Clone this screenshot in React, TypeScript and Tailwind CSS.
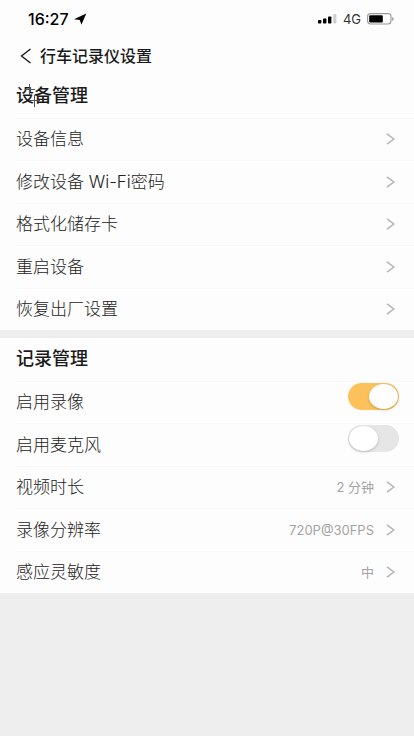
import { useState } from 'react';

type Row = {
  label: string;
  value?: string;
};

const deviceRows: Row[] = [
  { label: '设备信息' },
  { label: '修改设备 Wi-Fi密码' },
  { label: '格式化储存卡' },
  { label: '重启设备' },
  { label: '恢复出厂设置' },
];

const recordRows: Row[] = [
  { label: '视频时长', value: '2 分钟' },
  { label: '录像分辨率', value: '720P@30FPS' },
  { label: '感应灵敏度', value: '中' },
];

function StatusBar() {
  return (
    <div className="flex h-[37px] items-center justify-between pl-7 pr-5 text-black">
      <div className="flex items-center gap-1">
        <span className="text-base font-medium leading-5">16:27</span>
        <svg width="14" height="12" viewBox="0 0 14 12" fill="currentColor">
          <path d="M13.300 0.400 8.400 11.700 6.800 7 1 6.300Z" />
        </svg>
      </div>
      <div className="flex items-center gap-1.5">
        <svg width="19" height="10" viewBox="0 0 19 10" fill="currentColor">
          <rect x="0" y="6" width="3.4" height="3.5" rx="0.8" />
          <rect x="5" y="4.5" width="3.4" height="5" rx="0.8" />
          <rect x="10" y="2.5" width="3.4" height="7" rx="0.8" />
          <rect x="15.2" y="0" width="3.2" height="9.5" rx="0.8" fill="#cfcfcf" />
        </svg>
        <span className="text-[13px] leading-4 text-[#333]">4G</span>
        <svg width="27" height="12" viewBox="0 0 27 12">
          <rect x="0.6" y="0.6" width="23.4" height="10.4" rx="3" fill="none" stroke="#9a9a9a" strokeWidth="1.1" />
          <rect x="2.2" y="2.2" width="13.6" height="7.200" rx="1.2" fill="#000" />
          <path d="M25.200 4v4c1-.3 1.400-1 1.400-2s-.4-1.700-1.400-2Z" fill="#9a9a9a" />
        </svg>
      </div>
    </div>
  );
}

function Chevron() {
  return (
    <svg width="9" height="12" viewBox="0 0 9 12" fill="none" stroke="#b4b4b4" strokeWidth="1.5">
      <path d="M1 0.800 7.800 6 1 11.200" />
    </svg>
  );
}

function LinkRow({ label, value }: Row) {
  return (
    <li className="ml-4 flex border-t border-[#f8f8f8]">
      <button type="button" className="flex flex-1 items-center pr-[19px] text-left">
        <span className="flex-1 text-[17px] font-light leading-6 text-[#222]">{label}</span>
        {value && <span className="mr-3 text-[13px] leading-5 text-[#a3a3a3]">{value}</span>}
        <Chevron />
      </button>
    </li>
  );
}

function SwitchRow({ label, initial }: { label: string; initial: boolean }) {
  const [checked, setChecked] = useState(initial);

  return (
    <li className="ml-4 flex border-t border-[#f8f8f8]">
      <label className="flex flex-1 items-center pr-[15px]">
        <span className="flex-1 text-[17px] font-light leading-6 text-[#222]">{label}</span>
        <input
          type="checkbox"
          role="switch"
          checked={checked}
          onChange={(e) => setChecked(e.target.checked)}
          className="mt-px h-[27px] w-[51px] appearance-none self-start rounded-full bg-[#e6e6e6] p-px before:block before:h-[25px] before:w-[29px] before:rounded-[50%] before:bg-white before:shadow-[0_1px_3px_rgba(0,0,0,0.2)] checked:bg-[#fdc15c] checked:before:ml-5"
        />
      </label>
    </li>
  );
}

function SectionTitle({ children }: { children: string }) {
  return <h2 className="pl-4 text-[18px] font-medium leading-6 text-[#1a1a1a]">{children}</h2>;
}

export default function App() {
  return (
    <div className="min-h-screen bg-[#eeeeee] font-[Inter,'Noto_Sans_CJK_SC',sans-serif]">
      <header className="bg-[#fdfdfd]">
        <StatusBar />
        <div className="flex h-[38px] items-center gap-2 pl-5">
          <button type="button" aria-label="返回">
            <svg width="12" height="16" viewBox="0 0 12 16" fill="none" stroke="#1a1a1a" strokeWidth="1.4">
              <path d="M10.500 1 1.500 8l9 7" />
            </svg>
          </button>
          <h1 className="text-base font-medium leading-6 text-[#1a1a1a]">行车记录仪设置</h1>
        </div>
      </header>

      <main className="flex flex-col gap-2">
        <section className="grid min-h-[255px] auto-rows-fr bg-[#fdfdfd]">
          <div className="flex items-center">
            <div className="relative">
              <SectionTitle>设备管理</SectionTitle>
              {/* small cross marks over the first character */}
              <svg
                className="absolute left-6 top-0"
                width="16"
                height="24"
                viewBox="0 0 16 24"
                fill="none"
                stroke="#555"
                strokeWidth="1"
              >
                <path d="M5.500 0v11M1 5.500h10M10.500 11v12M5 16.500h11" />
              </svg>
            </div>
          </div>
          <ul className="contents">
            {deviceRows.map((row) => (
              <LinkRow key={row.label} {...row} />
            ))}
          </ul>
        </section>

        <section className="grid min-h-[255px] auto-rows-fr bg-[#fdfdfd]">
          <div className="flex items-center">
            <SectionTitle>记录管理</SectionTitle>
          </div>
          <ul className="contents">
            <SwitchRow label="启用录像" initial={true} />
            <SwitchRow label="启用麦克风" initial={false} />
            {recordRows.map((row) => (
              <LinkRow key={row.label} {...row} />
            ))}
          </ul>
        </section>
      </main>
    </div>
  );
}
